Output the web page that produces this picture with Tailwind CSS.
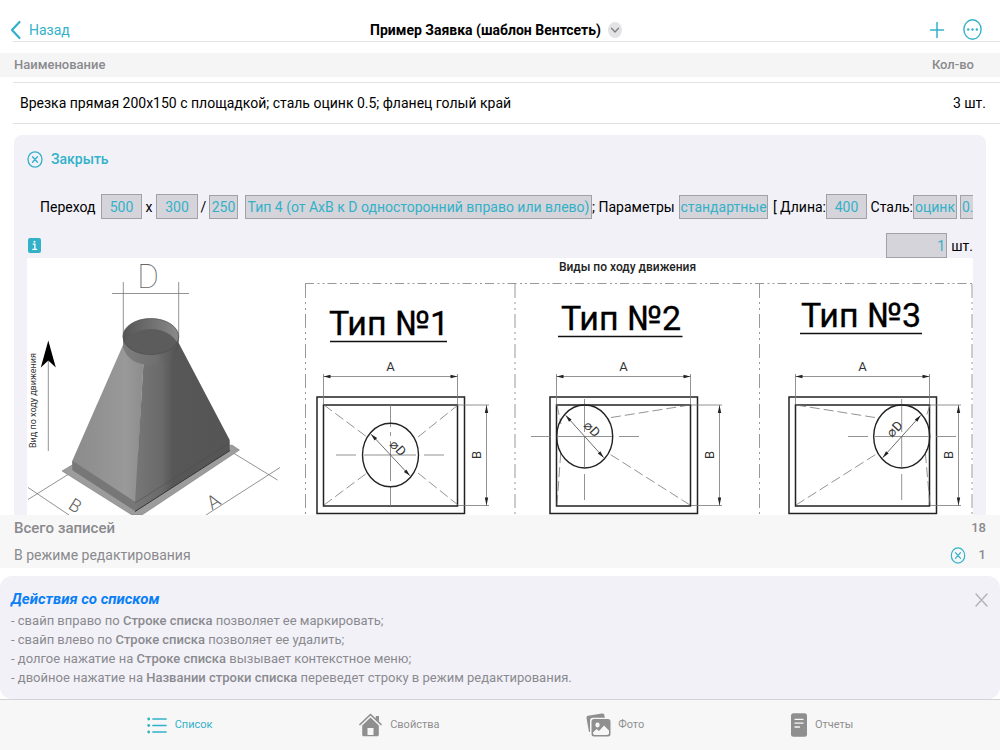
<!DOCTYPE html>
<html lang="ru">
<head>
<meta charset="utf-8">
<meta name="viewport" content="width=device-width, initial-scale=1">
<title>Пример Заявка (шаблон Вентсеть)</title>
<script src="https://cdn.jsdelivr.net/npm/@tailwindcss/browser@4"></script>
</head>
<body class="flex h-screen flex-col overflow-hidden bg-white font-['Roboto','Liberation_Sans',sans-serif] text-sm text-black">

<header class="ml-[13px] flex h-[42px] shrink-0 items-end border-b border-[#e2e2e2]">
  <div class="-ml-[3px] flex flex-1 items-center pb-[1px]">
    <button type="button" class="flex items-center gap-[7px] text-[#33b1c9]">
      <svg class="h-5 w-[12px]" viewBox="0 0 12 20" fill="none" stroke="currentColor" stroke-width="2.2" stroke-linecap="round" stroke-linejoin="round" aria-hidden="true"><path d="M9.500 2 2 10l7.500 8"/></svg>
      <span>Назад</span>
    </button>
  </div>
  <div class="flex items-center gap-[7px] pb-[1px]">
    <h1 class="font-bold">Пример Заявка (шаблон Вентсеть)</h1>
    <button type="button" aria-label="Меню документа">
      <svg class="h-4 w-[14px]" viewBox="0 0 14 16" aria-hidden="true"><ellipse cx="7" cy="8" rx="7" ry="8" fill="#e3e3e6"/><path d="m3.5 6.300 3.500 3.700 3.500-3.700" fill="none" stroke="#7d7d82" stroke-width="1.300" stroke-linecap="round" stroke-linejoin="round"/></svg>
    </button>
  </div>
  <div class="flex flex-1 items-center justify-end gap-[18px] pr-[18px] pb-[1px] text-[#33b1c9]">
    <button type="button" aria-label="Добавить">
      <svg class="h-5 w-4" viewBox="0 0 16 20" fill="none" stroke="currentColor" stroke-width="1.500" stroke-linecap="round" aria-hidden="true"><path d="M1.500 10h13M8 2.500v15"/></svg>
    </button>
    <button type="button" aria-label="Ещё">
      <svg class="h-[21px] w-[19px]" viewBox="0 0 19 21" aria-hidden="true"><ellipse cx="9.500" cy="10.500" rx="8.600" ry="9.700" fill="none" stroke="currentColor" stroke-width="1.400"/><g fill="currentColor"><circle cx="5.200" cy="10.500" r="1.200"/><circle cx="9.500" cy="10.500" r="1.200"/><circle cx="13.800" cy="10.500" r="1.200"/></g></svg>
    </button>
  </div>
</header>

<div class="mt-[11px] flex h-6 shrink-0 items-center justify-between bg-[#f5f5f5] pr-[26px] pl-[14px] text-[13px] font-medium text-[#8a8a8e]">
  <span>Наименование</span>
  <span>Кол-во</span>
</div>

<main class="flex min-h-0 flex-1 flex-col overflow-hidden pt-[5px]">
  <div class="ml-[13px] flex h-[42px] shrink-0 items-center justify-between border-y border-[#e2e2e2] pr-[14px] pl-[7px]">
    <span>Врезка прямая 200x150 с площадкой; сталь оцинк 0.5; фланец голый край</span>
    <span>3 шт.</span>
  </div>

  <section class="mx-[14px] mt-[11px] shrink-0 rounded-t-lg bg-[#f2f1f8] px-[13px] pt-[14px]">
    <button type="button" class="flex items-center gap-2 font-medium text-[#33b1c9]">
      <svg class="h-[17px] w-4" viewBox="0 0 16 17" fill="none" stroke="currentColor" stroke-width="1.300" stroke-linecap="round" aria-hidden="true"><ellipse cx="8" cy="8.500" rx="7" ry="7.700"/><path d="m5.500 5.700 5 5.600m0-5.600-5 5.600"/></svg>
      Закрыть
    </button>

    <div class="mt-[25px] flex h-[25px] items-center overflow-hidden pl-[13px] whitespace-nowrap">
      <span class="w-[61px] shrink-0">Переход</span>
      <input aria-label="Сторона A" value="500" class="h-[25px] w-[41px] shrink-0 border border-[#a2a2a6] bg-[#d5d4da] text-center text-[#33b1c9]">
      <span class="w-[14px] shrink-0 text-center">x</span>
      <input aria-label="Сторона B" value="300" class="h-[25px] w-[42px] shrink-0 border border-[#a2a2a6] bg-[#d5d4da] text-center text-[#33b1c9]">
      <span class="w-[11px] shrink-0 text-center">/</span>
      <select aria-label="Диаметр" class="h-6 w-[29px] shrink-0 appearance-none border border-[#a2a2a6] bg-[#d5d4da] text-center text-[#33b1c9]"><option>250</option></select>
      <select aria-label="Тип перехода" class="ml-[7px] h-6 w-[347px] shrink-0 appearance-none border border-[#a2a2a6] bg-[#d5d4da] text-center text-[#33b1c9]"><option>Тип 4 (от AxB к D односторонний вправо или влево)</option></select>
      <span class="w-[87px] shrink-0">; Параметры</span>
      <select aria-label="Параметры" class="h-6 w-[89px] shrink-0 appearance-none border border-[#a2a2a6] bg-[#d5d4da] text-center text-[#33b1c9]"><option>стандартные</option></select>
      <label for="length" class="w-[58px] shrink-0 text-right">[ Длина:</label>
      <input id="length" value="400" class="h-[25px] w-[41px] shrink-0 border border-[#a2a2a6] bg-[#d5d4da] text-center text-[#33b1c9]">
      <label for="steel" class="w-[46px] shrink-0 text-right">Сталь:</label>
      <select id="steel" class="h-6 w-[44px] shrink-0 appearance-none border border-[#a2a2a6] bg-[#d5d4da] text-center text-[#33b1c9]"><option>оцинк</option></select>
      <select aria-label="Толщина стали" class="ml-[3px] h-6 w-[30px] shrink-0 appearance-none border border-[#a2a2a6] bg-[#d5d4da] pl-[1px] text-[#33b1c9]"><option>0.5</option></select>
    </div>

    <div class="mt-[14px] flex h-[25px] items-center justify-between">
      <button type="button" aria-label="Справка">
        <svg class="ml-[1px] h-[15px] w-[13px]" viewBox="0 0 13 15" aria-hidden="true"><rect width="13" height="15" rx="2" fill="#33b1c9"/><path d="M4.700 6.200h2.200v5M4.300 11.300h4.800" fill="none" stroke="#fff" stroke-width="1.300"/><circle cx="6.500" cy="3.700" r="1" fill="#fff"/></svg>
      </button>
      <label class="flex items-center gap-1"><input value="1" aria-label="Количество" class="h-[25px] w-[61px] border border-[#a2a2a6] bg-[#d5d4da] pr-[1px] text-right text-[#33b1c9]">шт.</label>
    </div>

    <svg class="block w-full bg-white" viewBox="27 258 946 300" role="img" aria-label="Виды по ходу движения" font-family="Roboto,'Liberation Sans',sans-serif">
      <defs>
        <linearGradient id="left" x1="0" x2="1" y1="0" y2="0"><stop offset="0" stop-color="#8b8b8b"/><stop offset=".75" stop-color="#999"/><stop offset="1" stop-color="#8d8d8d"/></linearGradient>
        <linearGradient id="right" x1="0" x2="1" y1="0" y2="0"><stop offset="0" stop-color="#777"/><stop offset=".28" stop-color="#6a6a6a"/><stop offset=".4" stop-color="#575757"/><stop offset="1" stop-color="#555"/></linearGradient>
        <linearGradient id="collar" x1="0" x2="1" y1="0" y2="0"><stop offset="0" stop-color="#7d7d7d"/><stop offset=".6" stop-color="#707070"/><stop offset="1" stop-color="#505050"/></linearGradient>
        <linearGradient id="wall" x1="0" x2="1" y1="0" y2="0"><stop offset="0" stop-color="#555"/><stop offset="1" stop-color="#8a8a8a"/></linearGradient>
        <g id="frame">
          <path d="M317 397h147.500v116.500H317z" fill="none" stroke="#222" stroke-width="1.500"/>
          <path d="M323.500 405h134v101h-134z" fill="none" stroke="#222" stroke-width="1.500"/>
          <path d="M323.500 374v30M457.500 374v30M458 405h31M458 505.500h31M323.500 376.500h134M486.500 405v101" fill="none" stroke="#777" stroke-width=".8"/>
          <path d="m323.500 376.500 7-1.700v3.400zM457.500 376.500l-7-1.700v3.400zM486.500 405l-1.700 8h3.400zM486.500 505.500l-1.700-8h3.400z" fill="#222"/>
          <text x="390.500" y="370.500" text-anchor="middle" font-size="13" fill="#333">A</text>
          <text transform="translate(481 455) rotate(-90)" text-anchor="middle" font-size="13" fill="#333">B</text>
        </g>
        <g id="diameter">
          <path d="M-28.500 0h57" stroke="#555" stroke-width=".8"/>
          <path d="m-28.500 0 7-1.700v3.400zM28.500 0l-7-1.700v3.400z" fill="#222"/>
        </g>
      </defs>

      <g fill="none" stroke="#777" stroke-width=".8">
        <path d="M112 293.500h77M123.300 282v56M178.700 282v56"/>
        <path d="M28 487.500 69 515M28 499.500 72 472M230 451l47.500 29M280 467.500 206 515M48.300 451v-92"/>
      </g>
      <path d="m62 471 10-6 160-20 7.500 5L142 515h-10z" fill="#9c9c9c" stroke="#777" stroke-width=".5"/>
      <path d="M123 345 72.300 460.700v9.600L135 511l8.500-148z" fill="url(#left)"/>
      <path d="M72.300 460.700 135 501.700V511l-62.700-41z" fill="#777"/>
      <path d="M178.700 343 229.700 440v10.500L135 511v-9.300L143.500 363z" fill="url(#right)"/>
      <path d="m135 503 94.700-60" stroke="#4b4b4b" stroke-width=".5"/>
      <path d="m135 511.500 95-61" stroke="#2f2f2f" stroke-width="1"/>
      <path d="M123 336.500V347c3 11 13 18 27.700 18s25-7 28-19v-9.500z" fill="url(#collar)"/>
      <ellipse cx="150.800" cy="336.500" rx="27.800" ry="18" fill="url(#wall)"/>
      <path d="M124.500 343c5-9 15-14 26.500-14s21 5 26.500 14c-4 7-14 11.500-26.500 11.500S129 350 124.500 343z" fill="#5c5c5c"/>
      <ellipse cx="150.800" cy="336.500" rx="27.800" ry="18" fill="none" stroke="#4d4d4d" stroke-width=".7"/>
      <path d="m48.300 340.500 7.500 27-7.500-7-7.500 7z" fill="#000"/>
      <g fill="#666" text-anchor="middle">
        <text x="148" y="288" font-size="33" font-weight="100">D</text>
        <text transform="translate(217 507) rotate(-32)" font-weight="300" font-size="19">A</text>
        <text transform="translate(72 511) rotate(32)" font-weight="300" font-size="18">B</text>
      </g>
      <text transform="translate(36 448) rotate(-90)" font-size="9" fill="#333">Вид по ходу движения</text>
      <text x="627.500" y="271" text-anchor="middle" font-size="12" font-weight="500" fill="#222">Виды по ходу движения</text>

      <g fill="none" stroke="#999" stroke-width="1">
        <path d="M305 283.500h668" stroke-dasharray="9 3.500 2 3 2 3"/>
        <path d="M305.500 284v274M515 284v274M759.500 284v274M972 284v274" stroke-dasharray="14 4 2 4 2 4"/>
      </g>
      <g fill="#000" stroke="#000" stroke-width=".3" text-anchor="middle" font-size="34">
        <text x="389" y="335">Тип №1</text>
        <text x="621" y="330">Тип №2</text>
        <text x="861" y="327">Тип №3</text>
      </g>
      <path d="M330 341.500h117M558 336.500h124.500M800 333.500h122" stroke="#111" stroke-width="1.500"/>

      <use href="#frame"/><use href="#frame" x="233"/><use href="#frame" x="472"/>

      <g fill="none" stroke="#777" stroke-width=".8">
        <path d="m324 405 43 32m51 0 40-32M324 505l43-32m51 0 40 32" stroke-dasharray="10 4"/>
        <path d="M336 455h20m8 0h52m8 0h20M390.500 405v22m0 5v4m0 5v40m0 5v20"/>
        <path d="m690 405-82 13M690 505l-82-52M557 405l4 19M557 505l4-56" stroke-dasharray="10 4"/>
        <path d="M531 436.500h20m7 0h54m7 0h20M584.500 399v33m0 5v30m0 7v26"/>
        <path d="m796 405 82 13M796 505l82-52M930 405l-4 12M930 505l-5-56" stroke-dasharray="10 4"/>
        <path d="M848 436.500h20m7 0h54m7 0h20M901.700 399v33m0 5v30m0 7v26"/>
      </g>
      <g fill="none" stroke="#222" stroke-width="1.400">
        <ellipse cx="390.500" cy="455" rx="28" ry="31.700"/>
        <ellipse cx="584.700" cy="436.500" rx="28" ry="31.500"/>
        <ellipse cx="901.700" cy="436.500" rx="28" ry="31.500"/>
      </g>
      <use href="#diameter" transform="translate(390.500 455) rotate(47)"/>
      <use href="#diameter" transform="translate(584.700 436.500) rotate(48)"/>
      <use href="#diameter" transform="translate(901.700 436.500) rotate(-48)"/>
      <g fill="#333" text-anchor="middle" font-size="13">
        <text transform="translate(395 451) rotate(47)">⌀D</text>
        <text transform="translate(589 432) rotate(47)">⌀D</text>
        <text transform="translate(898 432) rotate(-47)">⌀D</text>
      </g>
    </svg>
  </section>
</main>

<section class="flex h-[53px] shrink-0 flex-col justify-between bg-[#f7f7f7] py-[3px] pr-[14px] pl-[14px] text-[#8a8a8e]">
  <div class="flex items-center justify-between text-[15px] leading-5 font-medium"><span>Всего записей</span><span class="text-[13px]">18</span></div>
  <div class="flex items-center justify-between">
    <span>В режиме редактирования</span>
    <span class="flex items-center gap-[13px] text-[13px] font-medium">
      <button type="button" aria-label="Закрыть редактирование" class="text-[#33b1c9]">
        <svg class="h-[17px] w-4" viewBox="0 0 16 17" fill="none" stroke="currentColor" stroke-width="1.200" stroke-linecap="round" aria-hidden="true"><ellipse cx="8" cy="8.500" rx="6.700" ry="7.600"/><path d="m5.500 5.700 5 5.600m0-5.600-5 5.600"/></svg>
      </button>1
    </span>
  </div>
</section>

<section class="mt-2 flex h-[123px] shrink-0 items-start justify-between rounded-xl bg-[#f2f1f8] pt-[13px] pr-3 pl-[11px]">
  <div>
    <h2 class="text-[15px] leading-5 font-bold text-[#0a7ff5] italic">Действия со списком</h2>
    <ul class="mt-[2px] text-[13px] leading-[19px] text-[#8a8a8e]">
      <li>- свайп вправо по <b class="font-medium">Строке списка</b> позволяет ее маркировать;</li>
      <li>- свайп влево по <b class="font-medium">Строке списка</b> позволяет ее удалить;</li>
      <li>- долгое нажатие на <b class="font-medium">Строке списка</b> вызывает контекстное меню;</li>
      <li>- двойное нажатие на <b class="font-medium">Названии строки списка</b> переведет строку в режим редактирования.</li>
    </ul>
  </div>
  <button type="button" aria-label="Скрыть подсказку" class="mt-1">
    <svg class="h-[14px] w-[13px]" viewBox="0 0 13 14" fill="none" stroke="#b4b4b9" stroke-width="1.500" stroke-linecap="round" aria-hidden="true"><path d="m1 1 11 12m0-12L1 13"/></svg>
  </button>
</section>

<nav class="flex h-[51px] shrink-0 items-center justify-evenly border-t border-[#d3d3d6] bg-[#f7f7f7] text-[11px] text-[#8f8f8f]">
  <a href="#list" class="flex items-center gap-2 text-[#33b1c9]">
    <svg class="h-[17px] w-5" viewBox="0 0 20 17" aria-hidden="true"><path d="M6 2h13M6 8.500h13M6 15h13" stroke="currentColor" stroke-width="1.700" stroke-linecap="round"/><g fill="currentColor"><circle cx="1.700" cy="2" r="1.400"/><circle cx="1.700" cy="8.500" r="1.400"/><circle cx="1.700" cy="15" r="1.400"/></g></svg>
    Список
  </a>
  <a href="#props" class="flex items-center gap-2">
    <svg class="h-6 w-[23px]" viewBox="0 0 23 24" aria-hidden="true"><path d="M1 11.500 11.500 1.500 22 11.500" fill="none" stroke="currentColor" stroke-width="1.700" stroke-linecap="round" stroke-linejoin="round"/><path fill="currentColor" d="M16.800 3H20v6l-3.200-3zM11.500 4.500l8.300 8V21.500c0 1-.600 1.800-1.600 1.800H14.500V15h-6v8.300H4.800c-1 0-1.600-.800-1.600-1.800V12.500zM8.500 22h6v1.300h-6z"/></svg>
    Свойства
  </a>
  <a href="#photo" class="flex items-center gap-[7px]">
    <svg class="h-6 w-[25px]" viewBox="0 0 25 24" aria-hidden="true"><path d="M3 19 .500 5C.300 3.800 1 3 2 2.800L16 .600c1.200-.2 2 .400 2.300 1.400l.500 2.700H7c-2 0-3 1-3 3V19z" fill="currentColor"/><rect x="5.500" y="6" width="19" height="17.500" rx="2.500" fill="currentColor"/><path d="M7 19.500 10.500 16l2.500 2 5-5.500 5 5V20c0 1.300-.700 2-2 2H9c-1.300 0-2-.700-2-2z" fill="#f7f7f7"/><ellipse cx="11.500" cy="12" rx="2.200" ry="2.400" fill="#f7f7f7"/></svg>
    Фото
  </a>
  <a href="#reports" class="flex items-center gap-2">
    <svg class="h-6 w-4" viewBox="0 0 16 24" aria-hidden="true"><rect width="16" height="23.500" y=".300" rx="2.500" fill="currentColor"/><path d="M4 6.300h8M4 10.200h8M4 14h4.500" stroke="#f7f7f7" stroke-width="1.300" stroke-linecap="round"/></svg>
    Отчеты
  </a>
</nav>
</body>
</html>
